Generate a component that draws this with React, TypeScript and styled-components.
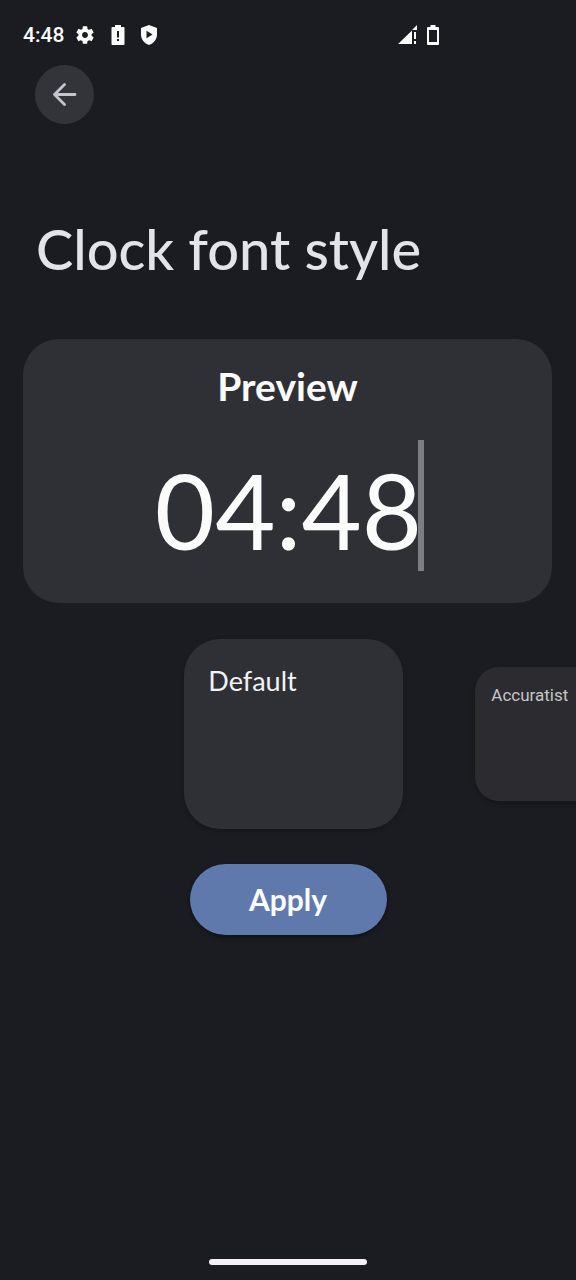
import React from "react";
import styled, { createGlobalStyle } from "styled-components";

const GlobalStyle = createGlobalStyle`
  * { box-sizing: border-box; }
  html, body { margin: 0; background: #1b1c21; }
  body { font-family: Lato, "Open Sans", sans-serif; color: #fbfbfb; }
`;

const Screen = styled.div`
  display: flex;
  flex-direction: column;
  min-height: 100vh;
  overflow: hidden;
  background: #1b1c21;
`;

const StatusBar = styled.header`
  display: flex;
  align-items: center;
  justify-content: space-between;
  height: 65px;
  padding: 5px 137px 0 23px;
`;

const StatusGroup = styled.div<{ $gap: number }>`
  display: flex;
  align-items: center;
  gap: ${(p) => p.$gap}px;
  svg { display: block; fill: #fbfbfb; }
`;

const StatusTime = styled.time`
  font: 500 21px/24px Roboto, sans-serif;
`;

const BackButton = styled.button`
  display: flex;
  align-items: center;
  justify-content: center;
  width: 59px;
  height: 59px;
  margin-left: 35px;
  padding: 0;
  border: 0;
  border-radius: 50%;
  background: #33343a;
  color: #c5c5d0;
`;

const Title = styled.h1`
  margin: 91px 36px 0;
  font-size: 56px;
  line-height: 68px;
  font-weight: 500;
  color: #e3e3ea;
`;

const PreviewCard = styled.section`
  display: flex;
  flex-direction: column;
  align-items: center;
  margin: 56px 24px 0 23px;
  padding: 23px 24px 32px;
  border-radius: 36px;
  background: #2f3036;
`;

const PreviewLabel = styled.h2`
  margin: 0;
  font-size: 39px;
  line-height: 48px;
  font-weight: 700;
`;

const ClockRow = styled.div`
  display: flex;
  margin-top: 30px;
  padding: 8px 0 0 4px;
  border-right: 6px solid #7d7e84;
`;

const ClockTime = styled.time`
  margin-right: -4px;
  font-size: 104px;
  line-height: 123px;
`;

const Carousel = styled.div`
  display: flex;
  align-items: center;
  gap: 72px;
  margin-top: 36px;
  padding-left: 32%;
`;

const FontCard = styled.button<{ $active?: boolean }>`
  display: flex;
  flex: none;
  align-items: flex-start;
  width: ${(p) => (p.$active ? 219 : 153)}px;
  height: ${(p) => (p.$active ? 190 : 134)}px;
  padding: ${(p) => (p.$active ? "24px" : "16px")};
  border: 0;
  border-radius: ${(p) => (p.$active ? 36 : 24)}px;
  background: ${(p) => (p.$active ? "#2f3036" : "#2c2b2f")};
  color: ${(p) => (p.$active ? "#f2f2f4" : "#c6c5c8")};
  font: ${(p) =>
    p.$active ? "400 27px/36px Lato, sans-serif" : "400 17px/24px Roboto, sans-serif"};
  box-shadow: 0 2px 4px rgba(0, 0, 0, 0.25);
`;

const ApplyButton = styled.button`
  align-self: center;
  width: 197px;
  height: 71px;
  margin-top: 35px;
  padding: 0 0 2px;
  border: 0;
  border-radius: 36px;
  background: #5f79ad;
  color: #fbfbff;
  font: 700 30px/36px Lato, sans-serif;
  box-shadow: 0 2px 4px rgba(0, 0, 0, 0.4);
`;

const HomeHandle = styled.div`
  width: 158px;
  height: 6px;
  margin: auto auto 15px;
  border-radius: 3px;
  background: #f3f1f6;
`;

const GearIcon = () => (
  <svg width="22" height="22" viewBox="0 0 24 24" aria-hidden="true">
    <path d="M19.14 12.94c.04-.3.06-.61.06-.94 0-.32-.02-.64-.07-.94l2.03-1.58c.18-.14.23-.41.12-.61l-1.92-3.32c-.12-.22-.37-.29-.59-.22l-2.39.96c-.5-.38-1.03-.7-1.62-.94l-.36-2.54c-.04-.24-.24-.41-.48-.41h-3.84c-.24 0-.43.17-.47.41l-.36 2.54c-.59.24-1.13.57-1.62.94l-2.39-.96c-.22-.08-.47 0-.59.22L2.74 8.87c-.12.21-.08.47.12.61l2.03 1.58c-.05.3-.09.63-.09.94s.02.64.07.94l-2.03 1.58c-.18.14-.23.41-.12.61l1.92 3.32c.12.22.37.29.59.22l2.39-.96c.5.38 1.03.7 1.62.94l.36 2.54c.05.24.24.41.48.41h3.84c.24 0 .44-.17.47-.41l.36-2.54c.59-.24 1.13-.56 1.62-.94l2.39.96c.22.08.47 0 .59-.22l1.92-3.32c.12-.22.07-.47-.12-.61l-2.01-1.58zM12 15.2c-1.77 0-3.2-1.43-3.2-3.2s1.43-3.2 3.2-3.2 3.2 1.43 3.2 3.2-1.43 3.2-3.2 3.2z" />
  </svg>
);

const BatteryAlertIcon = () => (
  <svg width="14" height="22" viewBox="0 0 14 22" aria-hidden="true">
    <path
      fillRule="evenodd"
      d="M4 1h6v2h2.500q1 0 1 1v16q0 1-1 1h-11q-1 0-1-1V4q0-1 1-1H4zM6 7v6.500h2V7zM6 15v2h2v-2z"
    />
  </svg>
);

const ShieldIcon = () => (
  <svg width="18" height="22" viewBox="0 0 18 22" aria-hidden="true">
    <path
      fillRule="evenodd"
      d="M9 1l8 3v6.500c0 5-3.400 9-8 10.500-4.600-1.500-8-5.500-8-10.500V4zM6.500 6.800v7.400l6-3.700z"
    />
  </svg>
);

const SignalIcon = () => (
  <svg width="20" height="20" viewBox="0 0 20 20" aria-hidden="true">
    <path d="M0 19L14 5.500V19zM14 5L19 0v5zM16 7h2v7h-2zM16 16h2v3h-2z" />
  </svg>
);

const BatteryIcon = () => (
  <svg width="12" height="20" viewBox="0 0 12 20" aria-hidden="true">
    <path
      fillRule="evenodd"
      d="M3.500 0h5v2H11q1 0 1 1v16q0 1-1 1H1q-1 0-1-1V3q0-1 1-1h2.500zM2 5v12h8V5z"
    />
  </svg>
);

const BackIcon = () => (
  <svg
    width="24"
    height="24"
    viewBox="0 0 24 24"
    fill="none"
    stroke="currentColor"
    strokeWidth="2.8"
    strokeLinecap="round"
    strokeLinejoin="round"
    aria-hidden="true"
  >
    <path d="M22 11.500H1.500M11.500 1.500l-10 10 10 10" />
  </svg>
);

export default function App() {
  return (
    <Screen>
      <GlobalStyle />
      <StatusBar>
        <StatusGroup $gap={10}>
          <StatusTime>4:48</StatusTime>
          <StatusGroup $gap={15}>
            <GearIcon />
            <BatteryAlertIcon />
            <ShieldIcon />
          </StatusGroup>
        </StatusGroup>
        <StatusGroup $gap={9}>
          <SignalIcon />
          <BatteryIcon />
        </StatusGroup>
      </StatusBar>
      <BackButton type="button" aria-label="Back">
        <BackIcon />
      </BackButton>
      <Title>Clock font style</Title>
      <PreviewCard>
        <PreviewLabel>Preview</PreviewLabel>
        <ClockRow>
          <ClockTime>04:48</ClockTime>
        </ClockRow>
      </PreviewCard>
      <Carousel>
        <FontCard type="button" $active>
          Default
        </FontCard>
        <FontCard type="button">Accuratist</FontCard>
      </Carousel>
      <ApplyButton type="button">Apply</ApplyButton>
      <HomeHandle />
    </Screen>
  );
}
